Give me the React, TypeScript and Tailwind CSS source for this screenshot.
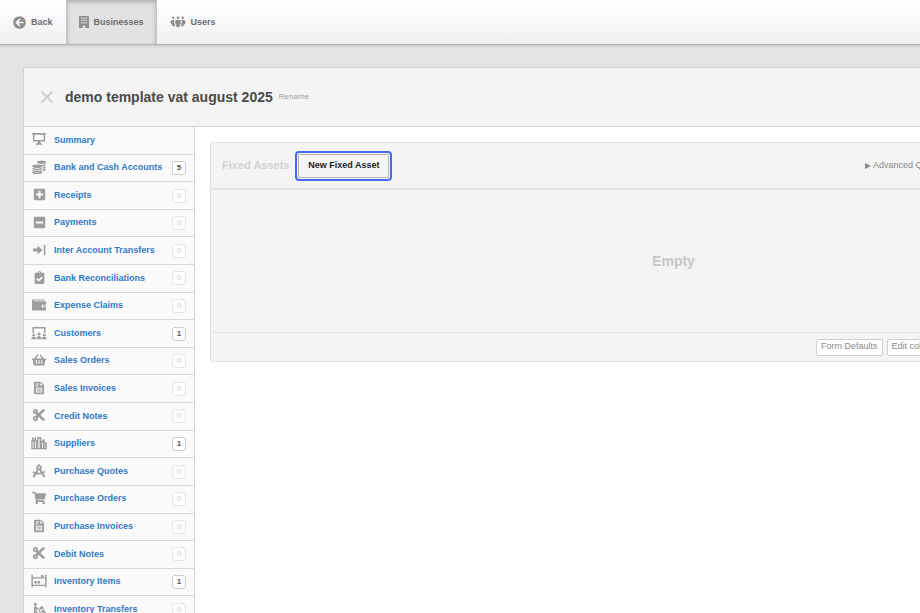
import type { ReactNode } from "react";
import {
  FaArrowCircleLeft,
  FaClipboardCheck,
  FaCut,
  FaMinusSquare,
  FaPlusSquare,
  FaShoppingBasket,
  FaShoppingCart,
} from "react-icons/fa";

function Glyph({ children }: { children: ReactNode }) {
  return (
    <svg viewBox="0 0 16 14" className="h-[14px] w-4" fill="currentColor" aria-hidden="true">
      {children}
    </svg>
  );
}

const easel = (
  <Glyph>
    <path d="M1 1h14v1.8h-1V9.4H9V10l2.200 2.600-1 .8L8.700 11.700V13H7.300v-1.300L5.800 13.400l-1-.8L7 10v-.6H2V2.800H1zM3.400 2.800V8h9.200V2.800z" />
  </Glyph>
);

const coins = (
  <Glyph>
    <g fill="none" stroke="currentColor" strokeWidth="1.500">
      <path d="M14.300 4.300c-.5 1-1.800 1.300-3.300 1.400M14.300 6.800c-.5.900-1.500 1.200-2.500 1.300M14.300 9.200c-.5.900-1.500 1.200-2.500 1.300" />
      <path d="M1.700 8.200c1 1.600 8 1.600 9 0M1.700 10.300c1 1.600 8 1.600 9 0M1.700 12.200c1 1.600 8 1.600 9 0" />
    </g>
    <ellipse cx="10.600" cy="2.200" rx="4.500" ry="1.700" />
    <ellipse cx="6.200" cy="6.300" rx="5" ry="1.800" />
  </Glyph>
);

const transfer = (
  <Glyph>
    <path d="M2 5.500h4.500V2.400L11.600 7l-5.100 4.600V8.500H2zM12.800 2h1.600v10h-1.600z" />
  </Glyph>
);

const wallet = (
  <Glyph>
    <path d="M2.300 1.500h10.800c.5 0 .8.300.8.900H2.700v.8H14c.6 0 1 .4 1 1v2.600h-3.200c-1.800 0-1.800 2.700 0 2.700H15v1.900c0 .7-.4 1.100-1 1.100H2.400c-.8 0-1.400-.5-1.400-1.300V2.800c0-.8.500-1.300 1.300-1.300z" />
    <path d="M12 7.500h3v1.300h-3z" />
  </Glyph>
);

const audience = (
  <Glyph>
    <path d="M1.500 1h13v6H13V2.500H3V7H1.500z" />
    <circle cx="2.700" cy="9.200" r="1.400" />
    <circle cx="8" cy="8" r="1.600" />
    <circle cx="13.300" cy="9.200" r="1.400" />
    <path d="M.2 13.200c0-3.200 5-3.200 5 0zM5.500 13.200c0-4.200 5-4.200 5 0zM10.800 13.200c0-3.200 5-3.200 5 0z" />
  </Glyph>
);

const invoice = (
  <Glyph>
    <path
      fillRule="evenodd"
      d="M4 .8h5.800L13 4v8.500c0 .5-.3.800-.8.800H4c-.6 0-1-.3-1-.8V1.600c0-.5.400-.8 1-.8zM4.800 2.500v.9H8v-.9zM4.800 4.500v.9H7v-.9zM9.200 1.800v2.800H12zM5 6.800v4.700h6.200V6.800zm.9.900h4.400v1H5.900zm0 1.900h4.400v1H5.900z"
    />
  </Glyph>
);

const factory = (
  <Glyph>
    <path
      fillRule="evenodd"
      d="M.3 13.300V4.200h.6V1.500h1.700v2.700h.8V1.500h1.700v2.700h.8V2.200L7 1h3.300v4h1V3.500h2.500v2.700h2v7.100zM1.600 5.500v6.500h.9V5.500zm2.300 0v6.500h.9V5.500zm3.500-3v9.500h1.200V2.500zm3.700 4v5.500h.9V6.500zm2.400 1v1.200h.9V7.500zm0 2.500v1.500h.9V10z"
    />
  </Glyph>
);

const compass = (
  <Glyph>
    <path
      fillRule="evenodd"
      d="M7.100.2h1.800v1c2 .6 2.600 2.800 1.300 4.300l1.300 2.400 2.200-1.200.8 1.300-2.200 1.300 1.700 2.700v1.800l-1.800-.8-1.700-2.900c-1.700.6-3.400.5-4.900.1L4 12.800l-2 1v-2l1.400-2.300-1.700-.8.7-1.400 1.900.9 1.500-2.700C4.500 4 5.100 1.800 7.100 1.200zM8 2.500a1 1 0 1 0 0 2 1 1 0 0 0 0-2zM7.400 6.300 6.400 8.500c1 .2 2.100.2 3.100-.1L8.500 6.300z"
    />
  </Glyph>
);

const shelves = (
  <Glyph>
    <path d="M.4.700h1.500v2.500h12.200V.7h1.500v12.600h-1.500V12H1.900v1.300H.4zM1.900 4.500v6.200h12.200V4.500z" fillRule="evenodd" />
    <path d="M3.400 7h2.400v2.400H3.400zM6.700 7h2.400v2.400H6.700zM10 1h2.500v2.500H10z" />
  </Glyph>
);

const porter = (
  <Glyph>
    <circle cx="4.300" cy="2.200" r="1.500" />
    <path d="M3 4.200h2.300l1.500 2 2 .3v1.200l-2.700-.3-.7-.7v2l1.800 2v2.800H5.900v-2.300L4.300 9.900l-1 3.600H1.900L3 9z" />
    <path d="M8.600 5.200l3.200-1.300 1.100 2.700-3.200 1.300zM10 8.800l3.400-1.300.8 2.300-3.200 1.200z" />
    <path d="M8.300 7.400l2 4.200 4.300-1.500.4 1-3 1.100a1.400 1.400 0 1 1-2.500.3L7.500 8z" />
  </Glyph>
);

const building = (
  <svg viewBox="0 0 10 12" className="h-3 w-[10px]" fill="currentColor" aria-hidden="true">
    <path
      fillRule="evenodd"
      d="M.8 0h8.400c.4 0 .8.400.8.800V12H6.300V9.500H3.700V12H0V.8C0 .4.400 0 .8 0zM2 1.500v1.200h1.500V1.500zm2.300 0v1.200h1.500V1.500zm2.300 0v1.200H8V1.500zM2 3.800V5h1.500V3.800zm2.300 0V5h1.500V3.800zm2.300 0V5H8V3.800zM2 6.200v1.200h1.500V6.200zm2.300 0v1.200h1.500V6.200zm2.300 0v1.200H8V6.200z"
    />
  </svg>
);

const people = (
  <svg viewBox="0 0 16 12" className="h-3 w-4" fill="currentColor" aria-hidden="true">
    <circle cx="3.300" cy="1.700" r="1.200" />
    <circle cx="8" cy="1.700" r="1.300" />
    <circle cx="12.700" cy="1.700" r="1.200" />
    <path d="M5.700 4h4.600c.8 1.600.7 3.500-.4 4.700L9.400 11.300H6.600L6.100 8.700C5 7.500 4.900 5.600 5.700 4zM1.600 4h2.900c-.6 2-.3 4 .7 5.200L4.900 10.300H2.500L2.200 8.800C0 7.700 0 5.200 1.600 4zM14.400 4h-2.900c.6 2 .3 4-.7 5.200l.3 1.100h2.400l.3-1.500C16 7.700 16 5.200 14.400 4z" />
  </svg>
);

const items: { label: string; count?: number; icon: ReactNode }[] = [
  { label: "Summary", icon: easel },
  { label: "Bank and Cash Accounts", count: 5, icon: coins },
  { label: "Receipts", count: 0, icon: <FaPlusSquare className="size-[13px]" /> },
  { label: "Payments", count: 0, icon: <FaMinusSquare className="size-[13px]" /> },
  { label: "Inter Account Transfers", count: 0, icon: transfer },
  { label: "Bank Reconciliations", count: 0, icon: <FaClipboardCheck className="size-[13px]" /> },
  { label: "Expense Claims", count: 0, icon: wallet },
  { label: "Customers", count: 1, icon: audience },
  { label: "Sales Orders", count: 0, icon: <FaShoppingBasket className="size-[14px]" /> },
  { label: "Sales Invoices", count: 0, icon: invoice },
  { label: "Credit Notes", count: 0, icon: <FaCut className="size-[14px]" /> },
  { label: "Suppliers", count: 1, icon: factory },
  { label: "Purchase Quotes", count: 0, icon: compass },
  { label: "Purchase Orders", count: 0, icon: <FaShoppingCart className="size-[14px]" /> },
  { label: "Purchase Invoices", count: 0, icon: invoice },
  { label: "Debit Notes", count: 0, icon: <FaCut className="size-[14px]" /> },
  { label: "Inventory Items", count: 1, icon: shelves },
  { label: "Inventory Transfers", count: 0, icon: porter },
];

function TopBar() {
  return (
    <nav className="flex h-[45px] border-b border-[#b4b4b4] bg-linear-to-b from-white to-[#f0f0f0] text-[9px] font-bold text-[#6c6c6c] shadow-sm">
      <a href="#back" className="flex items-center gap-[5px] px-[13px] pt-[2px]">
        <span className="pb-[2px] text-[#8e8e8e]">
          <FaArrowCircleLeft className="size-[13px]" />
        </span>
        Back
      </a>
      <a
        href="#businesses"
        className="flex items-center gap-[5px] border-x border-[#c4c4c4] bg-[#e2e2e2] px-3 pt-[2px] inset-shadow-sm inset-shadow-black/25"
      >
        <span className="pb-[2px] text-[#8e8e8e]">{building}</span>
        Businesses
      </a>
      <a href="#users" className="flex items-center gap-[5px] px-[13px] pt-[2px]">
        <span className="pb-[2px] text-[#8e8e8e]">{people}</span>
        Users
      </a>
    </nav>
  );
}

function Sidebar() {
  return (
    <ul className="grid h-[497px] w-[171px] shrink-0 auto-rows-fr border-r border-[#d4d4d4] bg-[#fafafa]">
      {items.map(({ label, count, icon }) => (
        <li key={label} className="border-b border-[#d9d9d9]">
          <a href="#list" className="flex h-full items-center pr-2 pl-[7px]">
            <span className="flex w-4 justify-center pb-[2px] text-[#9d9d9d]">{icon}</span>
            <span className="ml-[7px] grow text-[9px] font-bold whitespace-nowrap text-[#3379c4]">{label}</span>
            {count !== undefined && (
              <span
                className={
                  count > 0
                    ? "flex h-[14px] w-[14px] items-center justify-center rounded-[3px] border border-[#cccccc] bg-white text-[8px] font-bold text-[#555555]"
                    : "flex h-[14px] w-[14px] items-center justify-center rounded-[3px] border border-[#e4e4e4] bg-white text-[8px] text-[#cccccc]"
                }
              >
                {count}
              </span>
            )}
          </a>
        </li>
      ))}
    </ul>
  );
}

function FixedAssets() {
  return (
    <section className="rounded-[3px] border border-[#e2e2e2] bg-[#f4f4f4]">
      <header className="flex h-[47px] items-center border-b-2 border-[#e6e6e6] pl-[11px]">
        <h2 className="text-[11px] font-bold text-[#d2d2d2]">Fixed Assets</h2>
        <button
          type="button"
          className="ml-[9px] h-6 w-[91px] rounded-[1px] border border-[#b5b5b5] bg-[#f5f5f5] text-[9px] font-bold whitespace-nowrap text-[#1c1c1c] outline-2 outline-offset-1 outline-[#4768f0]"
        >
          New Fixed Asset
        </button>
        <div className="ml-auto w-[271px]">
          <button type="button" className="flex items-center gap-[2px] text-[9px] text-[#8a8a8a]">
            <svg viewBox="0 0 6 6" className="size-[6px]" fill="currentColor" aria-hidden="true">
              <path d="M0 0l6 3-6 3z" />
            </svg>
            Advanced Queries
          </button>
        </div>
      </header>
      <div className="flex h-[143px] items-center justify-center border-b border-[#e6e6e6] text-sm font-bold text-[#c6c6c6]">
        Empty
      </div>
      <footer className="flex h-7 items-center justify-end">
        <div className="flex w-[320px] gap-1 text-[9px] text-[#8a8a8a]">
          <button type="button" className="h-[17px] rounded-[2px] border border-[#d0d0d0] bg-white px-1">
            Form Defaults
          </button>
          <button type="button" className="h-[17px] rounded-[2px] border border-[#d0d0d0] bg-white px-1">
            Edit columns
          </button>
        </div>
      </footer>
    </section>
  );
}

export default function App() {
  return (
    <div className="min-h-screen overflow-x-hidden bg-[#e3e3e3] font-['Helvetica_Neue','Liberation_Sans',Arial,sans-serif]">
      <div className="min-w-[1176px]">
        <TopBar />
        <main className="mx-[23px] mt-[22px] border border-[#d0d0d0] bg-white">
          <header className="flex h-[59px] items-center border-b border-[#d4d4d4] bg-[#f4f4f4] pl-4">
            <button type="button" aria-label="Close" className="text-[#cfcfcf]">
              <svg viewBox="0 0 14 14" className="size-[14px]" fill="none" stroke="currentColor" strokeWidth="2">
                <path d="M1.500 1.500l11 11M12.500 1.500l-11 11" />
              </svg>
            </button>
            <h1 className="ml-[11px] text-sm font-bold text-[#4a4a4a]">demo template vat august 2025</h1>
            <a href="#rename" className="ml-[6px] text-[8px] text-[#a0a0a0]">
              Rename
            </a>
          </header>
          <div className="flex">
            <Sidebar />
            <div className="grow px-[15px] pt-[15px]">
              <FixedAssets />
            </div>
          </div>
        </main>
      </div>
    </div>
  );
}
